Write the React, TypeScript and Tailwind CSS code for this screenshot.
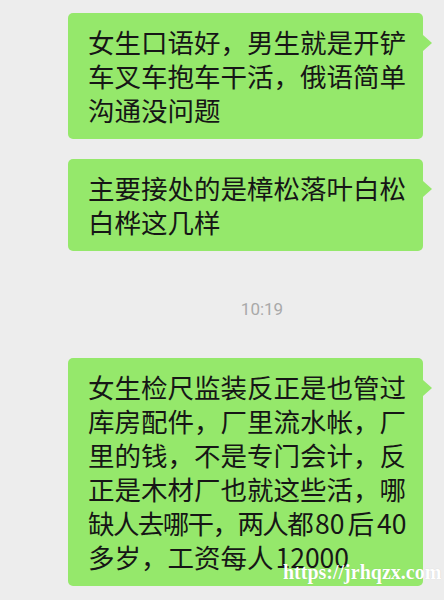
import React from "react";

const font = { fontFamily: '"Noto Sans CJK SC", "Noto Sans", sans-serif' };

type Line = React.ReactNode;

function Bubble({ lines }: { lines: Line[] }) {
  return (
    <div className="relative w-[355px] rounded-[5px] bg-[#95e86b]">
      <div className="pl-[20px] pr-[12px] pt-[12px] pb-[12px] text-[26.5px] leading-[34px] text-[#161616] whitespace-nowrap" style={font}>
        {lines.map((l, i) => (
          <div key={i}>{l}</div>
        ))}
      </div>
      <div className="absolute right-[-9px] top-[22px] h-0 w-0 border-y-[8px] border-l-[9px] border-y-transparent border-l-[#95e86b]" />
    </div>
  );
}

export default function App() {
  return (
    <div className="relative h-[600px] w-[444px] overflow-hidden bg-[#ededed]">
      <div className="flex flex-col items-end pr-[21px] pt-[13px]">
        <Bubble lines={["女生口语好，男生就是开铲", "车叉车抱车干活，俄语简单", "沟通没问题"]} />
        <div className="mt-[20px]">
          <Bubble lines={["主要接处的是樟松落叶白松", "白桦这几样"]} />
        </div>
        <div
          className="mt-[46px] self-stretch pl-[101px] text-center text-[17px] leading-[24px] text-[#a9a9a9]"
          style={{ fontFamily: "Roboto, sans-serif" }}
        >
          10:19
        </div>
        <div className="mt-[37px]">
          <Bubble
            lines={[
              "女生检尺监装反正是也管过",
              "库房配件，厂里流水帐，厂",
              "里的钱，不是专门会计，反",
              "正是木材厂也就这些活，哪",
              <>
                <span className="tracking-[-1.6px]">缺人去哪干，两人都</span>
                <span className="ml-[3px]">80</span>
                <span className="ml-[3px]">后</span>
                <span className="ml-[3px]">40</span>
              </>,
              <>
                多岁，工资每人<span className="ml-[2px]">12000</span>
              </>,
            ]}
          />
        </div>
      </div>
      <div
        className="absolute left-[283px] top-[559px] text-[20px] font-bold leading-[26px] text-white"
        style={{ fontFamily: '"Liberation Serif", serif', textShadow: "0 0 1px rgba(0,0,0,0.15)" }}
      >
        https://jrhqzx.com
      </div>
    </div>
  );
}
